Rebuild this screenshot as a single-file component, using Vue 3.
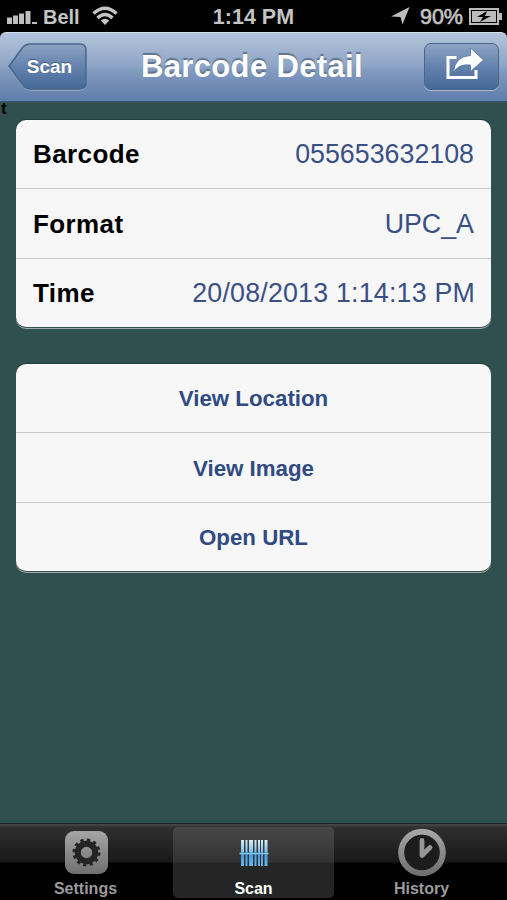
<template>
  <div class="screen">
    <header class="status">
      <div class="status-left">
        <svg class="signal" width="31" height="14" viewBox="0 0 31 14">
          <path d="M0 7.500h5V14H0zM6 5.500h5V14H6zM12 3.500h5V14h-5zM18.500 1h5v13h-5zM25 12h5v2h-5z" />
        </svg>
        <span class="carrier">Bell</span>
        <svg class="wifi" width="26" height="20" viewBox="0 0 26 20">
          <path d="M1.500 7.500Q13-3 24.500 7.500M5.500 12Q13 5 20.500 12" />
          <path class="dot" d="M8.800 14.500Q13 11 17.200 14.500L13 19z" />
        </svg>
      </div>
      <span class="clock">1:14 PM</span>
      <div class="status-right">
        <svg class="arrow" width="19" height="18" viewBox="0 0 19 18">
          <path d="M18.500 0 11.500 17.500 9.500 10 0 9.500z" />
        </svg>
        <span class="percent">90%</span>
        <svg class="battery" width="34" height="17" viewBox="0 0 34 17">
          <rect x="1" y="1" width="28" height="15" />
          <path class="tip" d="M30 5h3v7h-3z" />
          <path class="charge" d="M3 3h24v11H3z" />
          <path class="bolt" d="M18 3 8 9h6l-3 5 11-6h-6z" />
        </svg>
      </div>
    </header>

    <nav class="navbar">
      <button class="back">
        <svg width="79" height="48" viewBox="0 0 79 48">
          <defs>
            <linearGradient id="backFill" x1="0" y1="0" x2="0" y2="1">
              <stop offset="0" stop-color="#8da3c2" />
              <stop offset=".5" stop-color="#6482ad" />
              <stop offset="1" stop-color="#446998" />
            </linearGradient>
          </defs>
          <path class="back-light" d="M1 24 16 4Q19 2 22 2H72Q78 2 78 8V41Q78 47 72 47H22Q18 47 16 44z" />
          <path class="back-shape" d="M1 23 15 4Q18 1 22 1H72Q78 1 78 7V40Q78 46 72 46H22Q18 46 15 42z" />
        </svg>
        <span>Scan</span>
      </button>
      <h1>Barcode Detail</h1>
      <button class="share">
        <svg width="40" height="32" viewBox="0 0 40 32">
          <path class="share-box" d="M12.500 9.500H4V29.500H32V22" />
          <path class="share-arrow" d="M9.500 24.500Q11 8 26.500 7.500V0L39.500 12 26.500 23.500V17Q14.500 15.500 9.500 24.500z" />
        </svg>
      </button>
    </nav>

    <main>
      <span class="stray">t</span>
      <dl class="group details">
        <div v-for="row in details" :key="row.label" class="row">
          <dt>{{ row.label }}</dt>
          <dd>{{ row.value }}</dd>
        </div>
      </dl>
      <div class="group actions">
        <button v-for="action in actions" :key="action" class="row">{{ action }}</button>
      </div>
    </main>

    <footer class="tabbar">
      <button
        v-for="tab in tabs"
        :key="tab"
        class="tab"
        :class="{ active: tab === current }"
        @click="current = tab"
      >
        <svg width="50" height="50" viewBox="0 0 50 50">
          <defs>
            <linearGradient id="metal" x1="0" y1="0" x2="0" y2="1">
              <stop offset="0" stop-color="#a5a5a5" />
              <stop offset="1" stop-color="#707070" />
            </linearGradient>
            <linearGradient id="blue" gradientUnits="userSpaceOnUse" x1="0" y1="12" x2="0" y2="38">
              <stop offset="0" stop-color="#e0f1fc" />
              <stop offset=".48" stop-color="#83c1ed" />
              <stop offset=".52" stop-color="#3c94db" />
              <stop offset="1" stop-color="#66b6e9" />
            </linearGradient>
          </defs>
          <g v-if="tab === 'Settings'">
            <rect x="4" y="4" width="43" height="43" rx="9" fill="url(#metal)" />
            <circle cx="25.500" cy="25.500" r="8.700" class="gear" />
            <circle cx="25.500" cy="25.500" r="12.500" class="teeth" />
          </g>
          <g v-else-if="tab === 'Scan'">
            <path fill="url(#blue)" d="M12 13h3v26h-3zM16.500 13h2v26h-2zM20 13h4v26h-4zM25.500 13h2v26h-2zM29 13h2v26h-2zM32 13h2v26h-2zM35.500 13h3v26h-3z" />
            <path class="beam" d="M10.500 26.500h29" />
          </g>
          <g v-else>
            <circle cx="25" cy="25.500" r="20.800" class="dial" />
            <path class="hands" d="M25 13.500V28.500L33 20.500" />
          </g>
        </svg>
        <span>{{ tab }}</span>
      </button>
    </footer>
  </div>
</template>

<script setup>
import { ref } from 'vue';

const details = [
  { label: 'Barcode', value: '055653632108' },
  { label: 'Format', value: 'UPC_A' },
  { label: 'Time', value: '20/08/2013 1:14:13 PM' }
];

const actions = ['View Location', 'View Image', 'Open URL'];
const tabs = ['Settings', 'Scan', 'History'];
const current = ref('Scan');
</script>

<style>
body {
  background: #000;
}
</style>

<style scoped>
.screen {
  display: flex;
  flex-direction: column;
  height: 900px;
  overflow: hidden;
  background: #000;
  font-family: "Liberation Sans", Arial, sans-serif;
}

button {
  margin: 0;
  padding: 0;
  border: 0;
  background: none;
  font: inherit;
}

svg {
  display: block;
  overflow: visible;
}

.status {
  display: grid;
  grid-template-columns: 1fr auto 1fr;
  align-items: center;
  height: 32px;
  padding: 0 4px 0 7px;
  color: #c4c4c4;
  font-size: 20px;
  font-weight: bold;
}

.status-left,
.status-right {
  display: flex;
  align-items: center;
}

.status-right {
  justify-content: flex-end;
}

.signal,
.arrow {
  fill: #bebebe;
}

.signal {
  margin: 2px 5px 0 0;
}

.carrier,
.clock,
.percent {
  padding-top: 2px;
}

.clock {
  margin-right: 3px;
  font-size: 21.500px;
}

.wifi {
  margin-left: 12px;
  fill: none;
  stroke: #c4c4c4;
  stroke-width: 3.400;
}

.wifi .dot {
  fill: #c4c4c4;
  stroke: none;
}

.arrow {
  margin-right: 10px;
}

.percent {
  margin-right: 6px;
  font-size: 21.500px;
  font-weight: normal;
  -webkit-text-stroke: .6px #c4c4c4;
}

.battery rect {
  fill: none;
  stroke: #bbb;
  stroke-width: 2;
}

.battery .tip,
.battery .charge {
  fill: #bbb;
}

.battery .bolt {
  fill: #000;
}

.navbar {
  display: grid;
  grid-template-columns: 79px 1fr 75px;
  align-items: start;
  height: 70px;
  box-sizing: border-box;
  padding: 10px 8px 0;
  border-top: 1px solid #d5e0ef;
  border-bottom: 1px solid #38577a;
  border-radius: 6px 6px 0 0;
  background: linear-gradient(#b3c5dc, #8fa5c6 48%, #829bc0 54%, #5f7dab);
}

.back {
  display: grid;
  height: 48px;
  color: #fff;
  font-size: 19px;
  font-weight: bold;
  text-shadow: 0 -1px 1px #405b80;
}

.back > * {
  grid-area: 1 / 1;
}

.back span {
  padding: 13px 0 0 4px;
}

.back-shape {
  fill: url(#backFill);
  stroke: #4b6589;
  stroke-width: 1.5;
}

.back-light {
  fill: none;
  stroke: #aabbd2;
}

h1 {
  margin: 6px 7px 0 0;
  color: #fff;
  font-size: 31px;
  letter-spacing: .35px;
  line-height: 36px;
  text-align: center;
  text-shadow: 0 -2px 1px #61738d;
}

.share {
  display: grid;
  place-items: center;
  height: 47px;
  padding: 0 0 5px 5px;
  border: 1.5px solid #4b6589;
  border-radius: 7px;
  background: linear-gradient(#8da3c2, #6482ad 50%, #446998);
  box-shadow: 0 1px 0 #aabbd2;
}

.share-box {
  fill: none;
  stroke: #fff;
  stroke-width: 3;
}

.share-arrow {
  fill: #fff;
  stroke: #4f6f9a;
  stroke-width: .8;
}

main {
  position: relative;
  display: flex;
  flex: 1;
  flex-direction: column;
  gap: 37px;
  padding: 18px 16px 0;
  background: #30504f;
}

/* leftover text peeking out at the left edge */
.stray {
  position: absolute;
  top: -3px;
  left: 1px;
  font-size: 17px;
  font-weight: bold;
}

.group {
  height: 207px;
  margin: 0;
  border-radius: 10px;
  background: #f7f7f7;
  box-shadow: 0 -1px 0 #213c3d, 0 1px 0 #394e4e, 0 2px 0 #a0aaaa;
}

.row {
  display: flex;
  align-items: center;
  justify-content: space-between;
  width: 100%;
  height: 68px;
  box-sizing: border-box;
  padding: 0 17px;
}

.row + .row {
  height: 70px;
  padding-top: 1px;
  border-top: 1.500px solid #c9c9c9;
}

.row:last-child {
  height: 69px;
}

dt {
  font-size: 26px;
  font-weight: bold;
  letter-spacing: .4px;
}

dd {
  margin: 0;
  color: #3a5085;
  font-size: 26.800px;
}

.row:last-child dd {
  margin-right: -1px;
  letter-spacing: .2px;
}

.actions .row {
  justify-content: center;
  padding-top: 2px;
  color: #304b82;
  font-size: 22.300px;
  font-weight: bold;
}

.tabbar {
  display: grid;
  grid-template-columns: repeat(3, 161px);
  justify-content: space-between;
  height: 77px;
  box-sizing: border-box;
  padding: 3px 5px 2px;
  border-top: 1px solid #182424;
  background: linear-gradient(#454545 0 1px, #303030 3px, #181818 38px, #000 39px);
}

.tab {
  display: flex;
  flex-direction: column;
  align-items: center;
  border-radius: 5px;
  color: #9b9b9b;
  font-size: 16px;
  font-weight: bold;
}

.tab.active {
  background: linear-gradient(#474747, #333 35px, #252525 36px);
  color: #fff;
}

.tab span {
  margin-top: 3px;
  line-height: 18px;
}

.gear {
  fill: none;
  stroke: #242424;
  stroke-width: 6;
}

.teeth {
  fill: none;
  stroke: #242424;
  stroke-width: 3;
  stroke-dasharray: 3.272 3.272;
}

.dial {
  fill: #1c1c1c;
  stroke: url(#metal);
  stroke-width: 6;
}

.hands {
  fill: none;
  stroke: #969696;
  stroke-width: 4.800;
  stroke-linecap: round;
  stroke-linejoin: round;
}

.beam {
  stroke: #87c9ef;
  stroke-width: 1.500;
}
</style>
